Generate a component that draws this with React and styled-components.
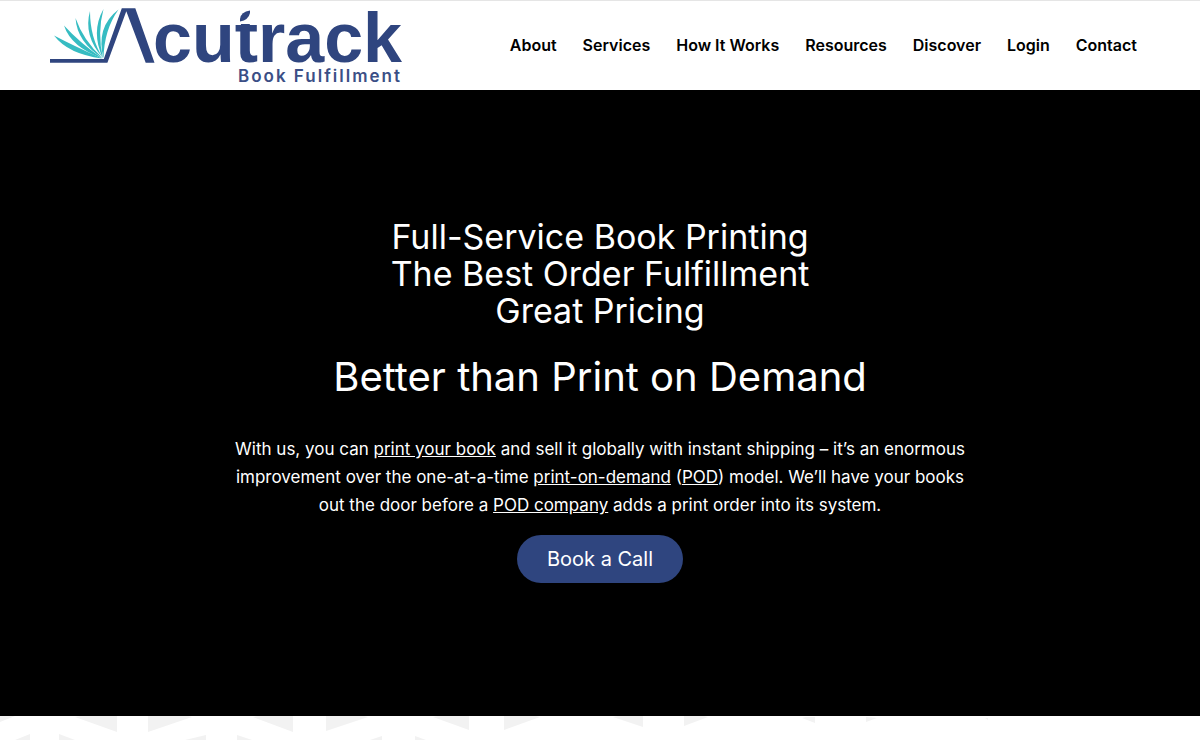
import React from "react";
import styled, { createGlobalStyle } from "styled-components";

const GlobalStyle = createGlobalStyle`
  * { box-sizing: border-box; }
  body {
    margin: 0;
    background: #fff;
    color: #000;
    font-family: Inter, "Liberation Sans", sans-serif;
    overflow-x: hidden;
  }
`;

const Header = styled.header`
  display: flex;
  align-items: center;
  justify-content: space-between;
  height: 90px;
  padding: 0 63px 2px 50px;
  border-top: 1px solid #e5e5e5;
  background: #fff;
`;

const LogoLink = styled.a`
  display: block;
  flex: none;
  line-height: 0;
`;

const Word = styled.text`
  font: 700 70px "Liberation Sans", Arial, sans-serif;
  fill: #2f457f;
`;

const Tagline = styled.text`
  font: 600 17px Inter, sans-serif;
  letter-spacing: 2px;
  fill: #3b4f86;
`;

const NavList = styled.ul`
  display: flex;
  gap: 26px;
  margin: 0;
  padding: 0;
  list-style: none;
`;

const NavLink = styled.a`
  color: #000;
  font-size: 16px;
  font-weight: 600;
  line-height: 24px;
  white-space: nowrap;
  text-decoration: none;
`;

const Hero = styled.section`
  display: flex;
  flex-direction: column;
  align-items: center;
  padding: 128px 20px 133px;
  background: #000;
  color: #fff;
  text-align: center;
`;

const Title = styled.h1`
  margin: 0;
  font-size: 34px;
  font-weight: 400;
  line-height: 37px;
`;

const Subtitle = styled.h2`
  margin: 24px 0 34px;
  font-size: 40px;
  font-weight: 400;
  line-height: 48px;
`;

const Lead = styled.p`
  max-width: 740px;
  margin: 0 0 16px;
  font-size: 17px;
  line-height: 28px;
`;

const TextLink = styled.a`
  color: inherit;
  text-decoration: underline;
`;

const CallButton = styled.button`
  height: 48px;
  padding: 0 30px;
  border: 0;
  border-radius: 24px;
  background: #2f457f;
  color: #fff;
  font: 400 20px Inter, sans-serif;
  cursor: pointer;
`;

const PatternBand = styled.section`
  height: 24px;
  overflow: hidden;
  background: #fff;
`;

const PatternArt = styled.svg`
  display: block;
  fill: #f2f2f2;
`;

const NAV = ["About", "Services", "How It Works", "Resources", "Discover", "Login", "Contact"];

const TRIANGLES = [
  "0,0 15,0 0,6", "75,1 80,0 117,0 117,16", "148,0 188,0 192,1 148,16",
  "253,1 258,0 293,0 293,16", "326,0 364,0 368,1 326,15",
  "433,1 438,0 469,0 469,14", "504,0 536,0 540,1 504,14",
  "613,1 618,0 643,0 643,11", "684,0 704,0 708,1 684,10",
  "802,2 806,1 815,1 815,7", "866,1 877,2 866,6", "985,2 988,2 988,4",
  "15,24 30,18 30,24", "59,18 75,24 59,24", "185,24 206,19 206,24",
  "237,19 252,24 237,24", "370,24 382,20 382,24", "415,20 426,24 415,24",
];

function Logo() {
  return (
    <svg width="356" height="87" viewBox="50 1 356 87" role="img" aria-label="Acutrack Book Fulfillment">
      <g fill="#36bcc2">
        <path d="M54 35.500Q72 45 102 58.500Q68 54 54 35.500Z" />
        <path d="M64 25.500Q80 43 102.500 58.500Q71 47 64 25.500Z" />
        <path d="M75.500 18Q83 40 102.500 58Q77 42 75.500 18Z" />
        <path d="M90 11Q90 38 103 58Q83 36 90 11Z" />
        <path d="M103.500 9Q97 33 103 58.500Q90.500 32 103.500 9Z" />
        <path d="M118.500 9.500Q104 30 103.500 58.500Q95.500 27 118.500 9.500Z" />
      </g>
      <path fill="#2f457f" d="M50 59H103.800L121.800 8.300H135.300L154.500 62.700H145.700L126.300 11.200L107.400 62.700H50Z" />
      <Word x="153" y="62">cutrack</Word>
      <path fill="#fff" d="M236 8H254V24H236Z" />
      <path fill="#2f457f" d="M240 21.500V19Q241 11.500 250 10.500V13Q248.500 20 240 21.500Z" />
      <Tagline x="238" y="82">Book Fulfillment</Tagline>
    </svg>
  );
}

export default function App() {
  return (
    <>
      <GlobalStyle />
      <Header>
        <LogoLink href="#home"><Logo /></LogoLink>
        <nav aria-label="Main">
          <NavList>
            {NAV.map((label) => (
              <li key={label}><NavLink href="#menu">{label}</NavLink></li>
            ))}
          </NavList>
        </nav>
      </Header>
      <main>
        <Hero>
          <Title>
            Full-Service Book Printing<br />
            The Best Order Fulfillment<br />
            Great Pricing
          </Title>
          <Subtitle>Better than Print on Demand</Subtitle>
          <Lead>
            With us, you can <TextLink href="#print">print your book</TextLink> and sell it globally with
            instant shipping – it’s an enormous<br />
            improvement over the one-at-a-time <TextLink href="#demand">print-on-demand</TextLink>{" "}
            (<TextLink href="#pod">POD</TextLink>) model. We’ll have your books<br />
            out the door before a <TextLink href="#company">POD company</TextLink> adds a print order into its
            system.
          </Lead>
          <CallButton type="button">Book a Call</CallButton>
        </Hero>
        <PatternBand>
          <PatternArt width="1200" height="24" viewBox="0 0 1200 24" aria-hidden="true">
            {TRIANGLES.map((points) => <polygon key={points} points={points} />)}
          </PatternArt>
        </PatternBand>
      </main>
    </>
  );
}
